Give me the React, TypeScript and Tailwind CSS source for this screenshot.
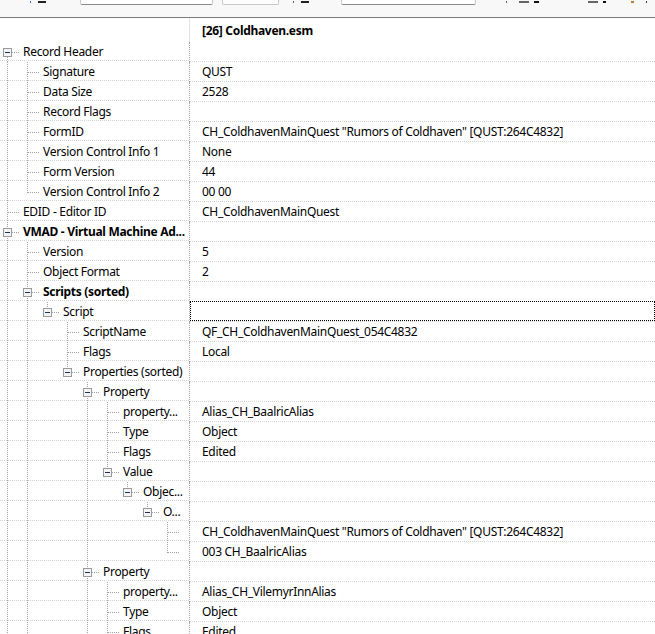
import React from "react";

type Row = { l: number; t?: string; v?: string; b?: boolean; exp?: boolean; focus?: boolean; hidden?: boolean };

const rows: Row[] = [
  { l: 0, t: "Record Header", exp: true },
  { l: 1, t: "Signature", v: "QUST" },
  { l: 1, t: "Data Size", v: "2528" },
  { l: 1, t: "Record Flags" },
  { l: 1, t: "FormID", v: 'CH_ColdhavenMainQuest "Rumors of Coldhaven" [QUST:264C4832]' },
  { l: 1, t: "Version Control Info 1", v: "None" },
  { l: 1, t: "Form Version", v: "44" },
  { l: 1, t: "Version Control Info 2", v: "00 00" },
  { l: 0, t: "EDID - Editor ID", v: "CH_ColdhavenMainQuest" },
  { l: 0, t: "VMAD - Virtual Machine Ad...", b: true, exp: true },
  { l: 1, t: "Version", v: "5" },
  { l: 1, t: "Object Format", v: "2" },
  { l: 1, t: "Scripts (sorted)", b: true, exp: true },
  { l: 2, t: "Script", exp: true, focus: true },
  { l: 3, t: "ScriptName", v: "QF_CH_ColdhavenMainQuest_054C4832" },
  { l: 3, t: "Flags", v: "Local" },
  { l: 3, t: "Properties (sorted)", exp: true },
  { l: 4, t: "Property", exp: true },
  { l: 5, t: "property...", v: "Alias_CH_BaalricAlias" },
  { l: 5, t: "Type", v: "Object" },
  { l: 5, t: "Flags", v: "Edited" },
  { l: 5, t: "Value", exp: true },
  { l: 6, t: "Objec...", exp: true },
  { l: 7, t: "O...", exp: true },
  { l: 8, t: "", v: 'CH_ColdhavenMainQuest "Rumors of Coldhaven" [QUST:264C4832]' },
  { l: 8, t: "", v: "003 CH_BaalricAlias" },
  { l: 4, t: "Property", exp: true },
  { l: 5, t: "property...", v: "Alias_CH_VilemyrInnAlias" },
  { l: 5, t: "Type", v: "Object" },
  { l: 5, t: "Flags", v: "Edited" },
  { l: 5, hidden: true },
  { l: 4, hidden: true },
  { l: 1, hidden: true },
  { l: 0, hidden: true },
];

function hasNext(i: number): boolean {
  const L = rows[i].l;
  for (let j = i + 1; j < rows.length; j++) {
    if (rows[j].l < L) return false;
    if (rows[j].l === L) return true;
  }
  return false;
}

function ancestorCont(i: number, a: number): boolean {
  for (let k = i - 1; k >= 0; k--) {
    if (rows[k].l === a) return hasNext(k);
    if (rows[k].l < a) return false;
  }
  return false;
}

const LINE = "#a0a0a0";

function TreeLines({ i }: { i: number }) {
  const r = rows[i];
  const L = r.l;
  const cx = 7 + 20 * L + 0.5;
  const mid = 10.5;
  const items: React.ReactNode[] = [];
  for (let a = 0; a < L; a++) {
    if (ancestorCont(i, a)) {
      const x = 7 + 20 * a + 0.5;
      items.push(<line key={"a" + a} x1={x} y1={0} x2={x} y2={20} stroke={LINE} strokeDasharray="1 1" />);
    }
  }
  const next = hasNext(i);
  const top = i === 0 ? mid : 0;
  const bottom = next ? 20 : mid;
  items.push(<line key="v" x1={cx} y1={top} x2={cx} y2={bottom} stroke={LINE} strokeDasharray="1 1" />);
  items.push(<line key="h" x1={cx} y1={mid} x2={20 + 20 * L} y2={mid} stroke={LINE} strokeDasharray="1 1" />);
  if (r.exp) {
    const bx = 3 + 20 * L;
    items.push(<rect key="bf" x={bx + 0.5} y={6.5} width={8} height={8} fill="#f4f4f4" stroke="#9a9a9a" />);
    items.push(<line key="bm" x1={bx + 2} y1={mid} x2={bx + 7} y2={mid} stroke="#1f2f5c" />);
  }
  return (
    <svg width={190} height={20} className="absolute left-0 top-0" shapeRendering="crispEdges">
      {items}
    </svg>
  );
}

function Mark({ w, c }: { w: number; c: string }) {
  return <div className="h-[2px] mt-[1px]" style={{ width: w, background: c }} />;
}

export default function App() {
  const font = { fontFamily: '"Noto Sans", "Open Sans", sans-serif' };
  return (
    <div className="w-[655px] h-[634px] overflow-hidden bg-white text-[12px] tracking-[-0.3px] text-black" style={font}>
      {/* toolbar */}
      <div className="h-[18px] bg-[#f8f8f8] border-b border-[#7a7a7a] overflow-hidden">
        <div className="flex items-start">
          <div className="w-[30px]" />
          <Mark w={1} c="#3a6ad0" />
          <div className="w-[7px]" />
          <Mark w={8} c="#222" />
          <div className="w-[34px]" />
          <div className="w-[133px] h-[5px] bg-white border-x border-b border-[#c8c8c8] border-b-[#8a8a8a] rounded-b-[2px]" />
          <div className="w-[9px]" />
          <div className="w-[57px] h-[5px] bg-[#fdfdfd] border-x border-b border-[#c8c8c8] rounded-b-[2px]" />
          <div className="w-[14px]" />
          <Mark w={1} c="#3a6ad0" />
          <div className="w-[7px]" />
          <Mark w={8} c="#222" />
          <div className="w-[32px]" />
          <div className="w-[135px] h-[5px] bg-white border-x border-b border-[#c8c8c8] border-b-[#8a8a8a] rounded-b-[2px]" />
          <div className="w-[30px]" />
          <Mark w={1} c="#3a6ad0" />
          <div className="w-[12px]" />
          <Mark w={10} c="#666" />
          <div className="w-[5px]" />
          <Mark w={5} c="#111" />
          <div className="w-[49px]" />
          <Mark w={10} c="#666" />
          <div className="w-[5px]" />
          <Mark w={3} c="#111" />
          <div className="w-[25px]" />
          <Mark w={3} c="#c08030" />
          <div className="w-[12px]" />
          <Mark w={1} c="#333" />
        </div>
      </div>
      {/* header */}
      <div className="flex h-[24px]">
        <div className="w-[190px] border-r border-[#e3e3e3]" />
        <div className="flex-1 pl-[12px] pt-[4px] font-bold leading-[17px]">[26] Coldhaven.esm</div>
      </div>
      {/* rows */}
      {rows.map((r, i) =>
        r.hidden ? null : (
          <div key={i} className="flex h-[20px]">
            <div className="relative w-[190px] h-[20px] border-r border-dotted border-[#a8a8a8]">
              <TreeLines i={i} />
              <div
                className={`relative h-[19px] border-b border-dotted border-[#d4d4d4] leading-[19px] whitespace-nowrap overflow-hidden ${r.b ? "font-bold" : ""}`}
                style={{ paddingLeft: 23 + 20 * r.l }}
              >
                {r.t}
              </div>
            </div>
            <div className="flex-1 h-[20px] border-b border-dotted border-[#d4d4d4] relative">
              {r.focus && <div className="absolute inset-0 -top-px border border-dotted border-black" />}
              <div className="pl-[12px] leading-[19px] whitespace-nowrap">{r.v}</div>
            </div>
          </div>
        )
      )}
    </div>
  );
}
